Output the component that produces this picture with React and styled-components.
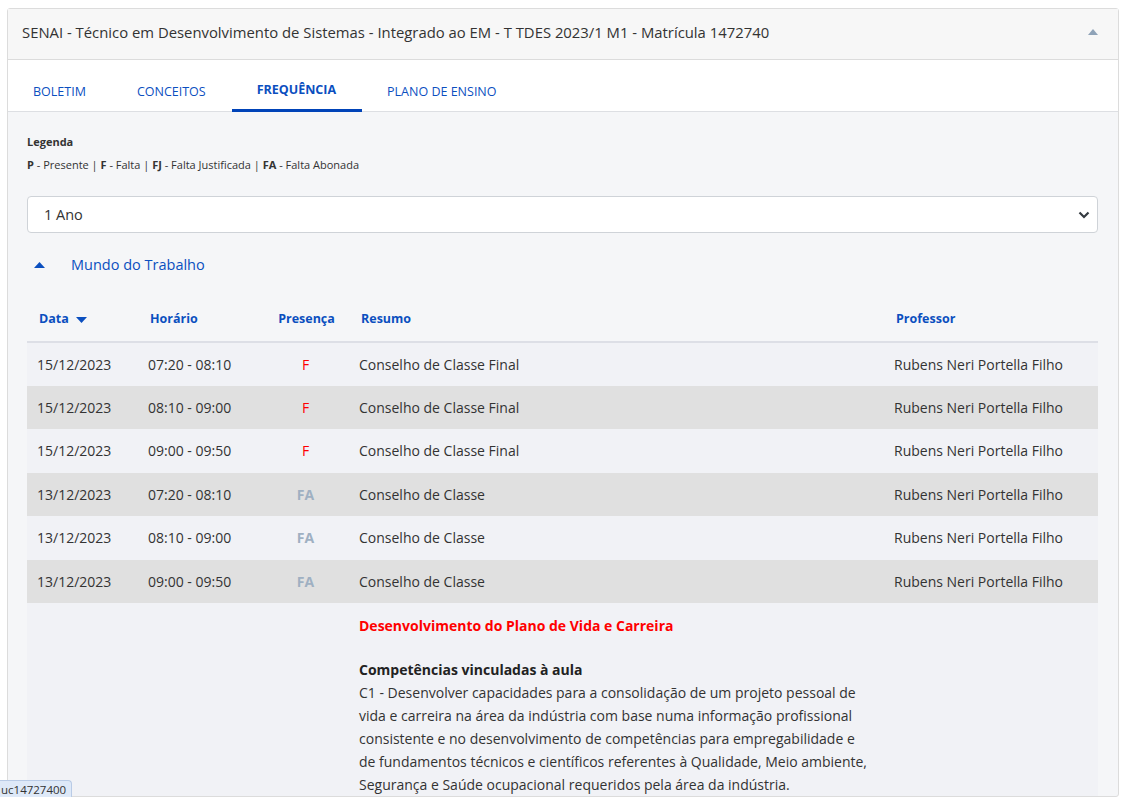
import React from "react";
import styled, { createGlobalStyle } from "styled-components";

const GlobalStyle = createGlobalStyle`
  html, body {
    margin: 0;
    padding: 0;
    background: #fff;
    font-family: "Open Sans", "Noto Sans", sans-serif;
    color: #333;
  }
  * { box-sizing: border-box; }
`;

const Page = styled.div`
  padding: 8px 13px 0 7px;
  height: 797px;
  overflow: hidden;
`;

const Card = styled.section`
  border: 1px solid #dcdcdc;
  border-radius: 3px;
  background: #f5f6f8;
`;

const CardHeader = styled.header`
  display: flex;
  align-items: center;
  justify-content: space-between;
  height: 51px;
  padding: 0 20px 5px 14px;
  background: #f7f7f7;
  border-bottom: 1px solid #dcdcdc;
  font-size: 14.85px;
  color: #333;
`;

const Tabs = styled.nav`
  display: flex;
  height: 52px;
  background: #fff;
  border-bottom: 1px solid #dddfe3;
`;

const Tab = styled.div`
  display: flex;
  align-items: center;
  padding: ${({ $active }) => ($active ? "10px 26px 0 25px" : "14px 26px 0 25px")};
  font-size: 12.5px;
  font-weight: ${({ $active }) => ($active ? 700 : 400)};
  color: #0b4fbf;
  border-bottom: 3px solid ${({ $active }) => ($active ? "#0043b8" : "transparent")};
  margin-bottom: -1px;
`;

const Body = styled.div`
  padding: 22px 20px 0 19px;
`;

const LegendTitle = styled.div`
  font-size: 11px;
  font-weight: 700;
  color: #333;
`;

const LegendLine = styled.div`
  margin-top: 8px;
  font-size: 11px;
  color: #333;
  b { font-weight: 700; }
`;

const SelectWrap = styled.div`
  position: relative;
  margin-top: 24px;
`;

const Select = styled.select`
  appearance: none;
  display: block;
  width: 100%;
  height: 37px;
  padding: 0 16px;
  font-family: inherit;
  font-size: 14.5px;
  color: #333;
  background: #fff;
  border: 1px solid #cfd3d8;
  border-radius: 4px;
`;

const Chevron = styled.svg`
  position: absolute;
  right: 8px;
  top: 15px;
  pointer-events: none;
`;

const Group = styled.div`
  display: flex;
  align-items: center;
  gap: 26px;
  height: 63px;
  padding-left: 7px;
  font-size: 14.5px;
  color: #0b4fbf;
`;

const Table = styled.table`
  width: 100%;
  border-collapse: collapse;
  table-layout: fixed;
  font-size: 14px;
`;

const Th = styled.th`
  height: 46px;
  padding: 0 10px 0 12px;
  text-align: ${({ $center }) => ($center ? "center" : "left")};
  font-size: 12.5px;
  font-weight: 700;
  color: #0b4fbf;
  border-bottom: 2px solid #dddfe6;
  white-space: nowrap;
`;

const Row = styled.tr`
  background: ${({ $alt }) => ($alt ? "#e0e0e0" : "#f1f2f6")};
`;

const Td = styled.td`
  height: 43.5px;
  padding: 0 10px;
  vertical-align: middle;
  color: #333;
  text-align: ${({ $center }) => ($center ? "center" : "left")};
`;

const Mark = styled.span`
  font-weight: ${({ $kind }) => ($kind === "FA" ? 700 : 400)};
  color: ${({ $kind }) => ($kind === "FA" ? "#9fb0c2" : "#ff0000")};
`;

const DetailCell = styled.td`
  padding: 11px 10px 0;
  vertical-align: top;
  line-height: 23px;
  color: #333;
`;

const RedTitle = styled.div`
  font-weight: 700;
  color: #ff0000;
  margin-bottom: 21px;
`;

const SubTitle = styled.div`
  font-weight: 700;
  color: #222;
`;

const StatusTip = styled.div`
  position: fixed;
  left: 0;
  bottom: 0;
  padding: 1px 5px 0 1px;
  font-size: 11.5px;
  color: #333;
  background: #dee9f8;
  border: 1px solid #b9cbe6;
  border-left: none;
  border-bottom: none;
  border-top-right-radius: 4px;
`;

const rows = [
  ["15/12/2023", "07:20 - 08:10", "F", "Conselho de Classe Final"],
  ["15/12/2023", "08:10 - 09:00", "F", "Conselho de Classe Final"],
  ["15/12/2023", "09:00 - 09:50", "F", "Conselho de Classe Final"],
  ["13/12/2023", "07:20 - 08:10", "FA", "Conselho de Classe"],
  ["13/12/2023", "08:10 - 09:00", "FA", "Conselho de Classe"],
  ["13/12/2023", "09:00 - 09:50", "FA", "Conselho de Classe"],
];

export default function App() {
  return (
    <>
      <GlobalStyle />
      <Page>
        <Card>
          <CardHeader>
            <span>SENAI - Técnico em Desenvolvimento de Sistemas - Integrado ao EM - T TDES 2023/1 M1 - Matrícula 1472740</span>
            <svg width="10" height="6" viewBox="0 0 10 6">
              <path d="M0 6 L5 0 L10 6 Z" fill="#8fa3b8" />
            </svg>
          </CardHeader>
          <Tabs>
            <Tab>BOLETIM</Tab>
            <Tab>CONCEITOS</Tab>
            <Tab $active>FREQUÊNCIA</Tab>
            <Tab>PLANO DE ENSINO</Tab>
          </Tabs>
          <Body>
            <LegendTitle>Legenda</LegendTitle>
            <LegendLine>
              <b>P</b> - Presente | <b>F</b> - Falta | <b>FJ</b> - Falta Justificada | <b>FA</b> - Falta Abonada
            </LegendLine>
            <SelectWrap>
              <Select defaultValue="1">
                <option value="1">1 Ano</option>
              </Select>
              <Chevron width="12" height="8" viewBox="0 0 12 8">
                <path d="M1.5 1.5 L6 6 L10.5 1.5" stroke="#343a40" strokeWidth="2.2" fill="none" />
              </Chevron>
            </SelectWrap>
            <Group>
              <svg width="11" height="6" viewBox="0 0 11 6">
                <path d="M0 6 L5.5 0 L11 6 Z" fill="#0b4fbf" />
              </svg>
              <span>Mundo do Trabalho</span>
            </Group>
            <Table>
              <colgroup>
                <col style={{ width: 111 }} />
                <col style={{ width: 124 }} />
                <col style={{ width: 87 }} />
                <col style={{ width: 535 }} />
                <col />
              </colgroup>
              <thead>
                <tr>
                  <Th>
                    Data{" "}
                    <svg width="11" height="6" viewBox="0 0 11 6" style={{ marginLeft: 4 }}>
                      <path d="M0 0 L5.5 6 L11 0 Z" fill="#0b4fbf" />
                    </svg>
                  </Th>
                  <Th>Horário</Th>
                  <Th $center>Presença</Th>
                  <Th>Resumo</Th>
                  <Th>Professor</Th>
                </tr>
              </thead>
              <tbody>
                {rows.map((r, i) => (
                  <Row key={i} $alt={i % 2 === 1}>
                    <Td>{r[0]}</Td>
                    <Td>{r[1]}</Td>
                    <Td $center>
                      <Mark $kind={r[2]}>{r[2]}</Mark>
                    </Td>
                    <Td>{r[3]}</Td>
                    <Td>Rubens Neri Portella Filho</Td>
                  </Row>
                ))}
                <Row>
                  <DetailCell />
                  <DetailCell />
                  <DetailCell />
                  <DetailCell>
                    <RedTitle>Desenvolvimento do Plano de Vida e Carreira</RedTitle>
                    <SubTitle>Competências vinculadas à aula</SubTitle>
                    C1 - Desenvolver capacidades para a consolidação de um projeto pessoal de vida e carreira na área da indústria com base numa informação profissional consistente e no desenvolvimento de competências para empregabilidade e de fundamentos técnicos e científicos referentes à Qualidade, Meio ambiente, Segurança e Saúde ocupacional requeridos pela área da indústria.
                  </DetailCell>
                  <DetailCell />
                </Row>
              </tbody>
            </Table>
          </Body>
        </Card>
      </Page>
      <StatusTip>uc14727400</StatusTip>
    </>
  );
}
